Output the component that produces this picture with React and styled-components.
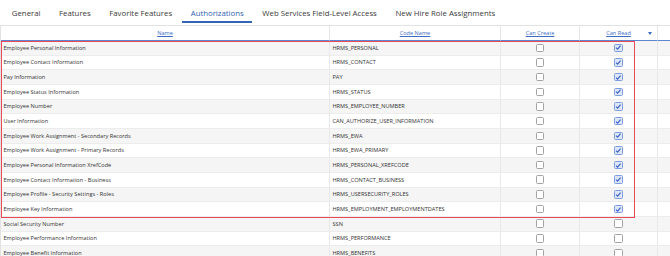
import React from "react";
import styled, { createGlobalStyle } from "styled-components";

const GlobalStyle = createGlobalStyle`
  html, body {
    margin: 0;
    padding: 0;
    background: #ffffff;
    font-family: "Open Sans", "Noto Sans", sans-serif;
  }
`;

const tabs = [
  "General",
  "Features",
  "Favorite Features",
  "Authorizations",
  "Web Services Field-Level Access",
  "New Hire Role Assignments",
];

const rows = [
  ["Employee Personal Information", "HRMS_PERSONAL", true],
  ["Employee Contact Information", "HRMS_CONTACT", true],
  ["Pay Information", "PAY", true],
  ["Employee Status Information", "HRMS_STATUS", true],
  ["Employee Number", "HRMS_EMPLOYEE_NUMBER", true],
  ["User Information", "CAN_AUTHORIZE_USER_INFORMATION", true],
  ["Employee Work Assignment - Secondary Records", "HRMS_EWA", true],
  ["Employee Work Assignment - Primary Records", "HRMS_EWA_PRIMARY", true],
  ["Employee Personal Information XrefCode", "HRMS_PERSONAL_XREFCODE", true],
  ["Employee Contact Information - Business", "HRMS_CONTACT_BUSINESS", true],
  ["Employee Profile - Security Settings - Roles", "HRMS_USERSECURITY_ROLES", true],
  ["Employee Key Information", "HRMS_EMPLOYMENT_EMPLOYMENTDATES", true],
  ["Social Security Number", "SSN", false],
  ["Employee Performance Information", "HRMS_PERFORMANCE", false],
  ["Employee Benefit Information", "HRMS_BENEFITS", false],
];

export default function App() {
  return (
    <Page>
      <GlobalStyle />
      <TabBar>
        {tabs.map((t) => (
          <Tab key={t} active={t === "Authorizations"}>
            {t}
          </Tab>
        ))}
      </TabBar>
      <TableWrap>
        <Grid>
          <HeadCell>
            <HeadLink>Name</HeadLink>
          </HeadCell>
          <HeadCell>
            <HeadLink>Code Name</HeadLink>
          </HeadCell>
          <HeadCell>
            <HeadLink>Can Create</HeadLink>
          </HeadCell>
          <HeadCell>
            <HeadLink>Can Read</HeadLink>
            <SortArrow />
          </HeadCell>
          <HeadCell />
          {rows.map(([name, code, read], i) => (
            <React.Fragment key={code}>
              <Cell shaded={i % 2 === 0}>{name}</Cell>
              <Cell shaded={i % 2 === 0}>{code}</Cell>
              <Cell shaded={i % 2 === 0} center>
                <Check />
              </Cell>
              <Cell shaded={i % 2 === 0} center>
                <Check checked={read} />
              </Cell>
              <Cell shaded={i % 2 === 0} />
            </React.Fragment>
          ))}
        </Grid>
        <Highlight />
      </TableWrap>
    </Page>
  );
}

function Check({ checked }) {
  return (
    <Box checked={checked}>
      {checked && (
        <svg width="7" height="7" viewBox="0 0 8 8">
          <path
            d="M1.3 4.2 L3.2 6 L6.8 1.8"
            fill="none"
            stroke="#3a5fc4"
            strokeWidth="1.4"
          />
        </svg>
      )}
    </Box>
  );
}

const Page = styled.div`
  width: 670px;
  height: 256px;
  overflow: hidden;
`;

const TabBar = styled.div`
  display: flex;
  gap: 2px;
  padding: 0 0 0 3.5px;
  height: 23px;
  align-items: stretch;
`;

const Tab = styled.div`
  display: flex;
  align-items: center;
  padding: 4px 8.3px 0;
  font-size: 7.8px;
  color: ${(p) => (p.active ? "#2f62b3" : "#3a3a3a")};
  border-bottom: 2px solid ${(p) => (p.active ? "#3565b5" : "transparent")};
  white-space: nowrap;
`;

const TableWrap = styled.div`
  position: relative;
  margin-top: 1.5px;
`;

const Grid = styled.div`
  display: grid;
  grid-template-columns: 329px 171px 79px 78px 13px;
  grid-auto-rows: 14.66px;
  grid-template-rows: 15.5px;
  border-top: 1px solid #e2e2e2;
  border-left: 1px solid #e2e2e2;
`;

const HeadCell = styled.div`
  position: relative;
  display: flex;
  align-items: center;
  justify-content: center;
  background: #ffffff;
  border-right: 1px solid #e6e6e6;
  border-bottom: 1px solid #5d86cf;
`;

const HeadLink = styled.span`
  font-size: 5.6px;
  color: #3b6cc2;
  text-decoration: underline;
`;

const SortArrow = styled.span`
  position: absolute;
  right: 5px;
  top: 6px;
  width: 0;
  height: 0;
  border-left: 2px solid transparent;
  border-right: 2px solid transparent;
  border-top: 3px solid #3b6cc2;
`;

const Cell = styled.div`
  display: flex;
  align-items: center;
  justify-content: ${(p) => (p.center ? "center" : "flex-start")};
  padding: 0 2.5px;
  font-size: 5.6px;
  color: #333333;
  white-space: nowrap;
  overflow: hidden;
  background: ${(p) => (p.shaded ? "#f5f5f5" : "#ffffff")};
  border-right: 1px solid #e8e8e8;
  border-bottom: 1px solid #ececec;
`;

const Box = styled.span`
  display: flex;
  align-items: center;
  justify-content: center;
  box-sizing: border-box;
  width: 8.5px;
  height: 8.5px;
  border-radius: 1.5px;
  border: 1px solid ${(p) => (p.checked ? "#7d9de0" : "#a3a3a3")};
  background: ${(p) => (p.checked ? "#dde7f8" : "#ffffff")};
`;

const Highlight = styled.div`
  position: absolute;
  left: 1px;
  top: 16.5px;
  width: 634px;
  height: 176.5px;
  box-sizing: border-box;
  border: 1.5px solid #ea4a58;
  pointer-events: none;
`;
